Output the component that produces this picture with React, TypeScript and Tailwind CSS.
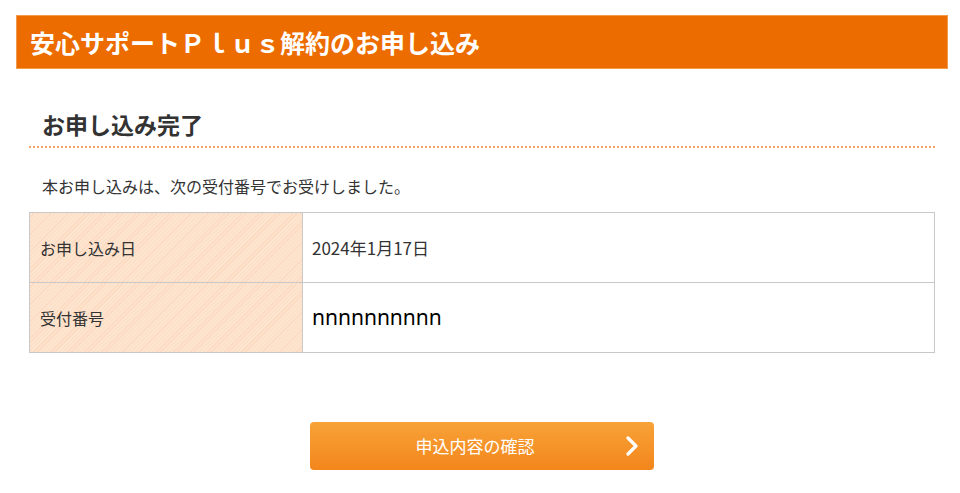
const rows = [
  { label: "お申し込み日", value: "2024年1月17日", big: false },
  { label: "受付番号", value: "nnnnnnnnnn", big: true }
];

export default function App() {
  return (
    <div className="min-h-screen bg-white font-['Noto_Sans_CJK_JP','Noto_Sans',sans-serif] text-[#333]">
      <div className="ml-4 mr-3 pt-[15px]">
        <h1 className="flex h-[54px] items-center border border-[#f39a4c] bg-[#ec6c00] px-[13px] text-[25px] font-bold leading-none text-white">
          安心サポートＰｌｕｓ解約のお申し込み
        </h1>
      </div>

      <div className="ml-[29px] mr-[25px] mt-[44px]">
        <h2 className="px-[13px] text-[23px] font-bold leading-none text-[#333]">お申し込み完了</h2>
        <div className="mt-[10px] border-b-2 border-dotted border-[#f5a262]" />
        <p className="mt-[30px] px-[13px] text-[16px] leading-none">本お申し込みは、次の受付番号でお受けしました。</p>

        <table className="mt-[18px] w-full border-collapse border border-[#c8c8c8]">
          <tbody>
            {rows.map((row) => (
              <tr key={row.label} className="h-[70px]">
                <th className="w-[273px] border border-[#c8c8c8] bg-[repeating-linear-gradient(135deg,#fde5d1_0px,#fde5d1_2px,#fbd8bd_2px,#fbd8bd_3px)] px-[10px] text-left text-[16px] font-normal">
                  {row.label}
                </th>
                <td className="border border-[#c8c8c8] px-[9px]">
                  {row.big ? (
                    <span className="font-['Noto_Sans',sans-serif] text-[21px] text-black">{row.value}</span>
                  ) : (
                    <span className="text-[17px]">{row.value}</span>
                  )}
                </td>
              </tr>
            ))}
          </tbody>
        </table>
      </div>

      <div className="mt-[69px] flex justify-center pl-[4px]">
        <button className="relative flex h-[48px] w-[344px] items-center justify-center rounded-[4px] bg-gradient-to-b from-[#f7a237] to-[#f3861a] pr-[14px] text-[17px] text-white">
          申込内容の確認
          <svg className="absolute right-[16px] top-1/2 -translate-y-1/2" width="12" height="20" viewBox="0 0 12 20">
            <path d="M2 2 L10 10 L2 18" fill="none" stroke="white" strokeWidth="3.2" strokeLinecap="round" strokeLinejoin="round" />
          </svg>
        </button>
      </div>
    </div>
  );
}
